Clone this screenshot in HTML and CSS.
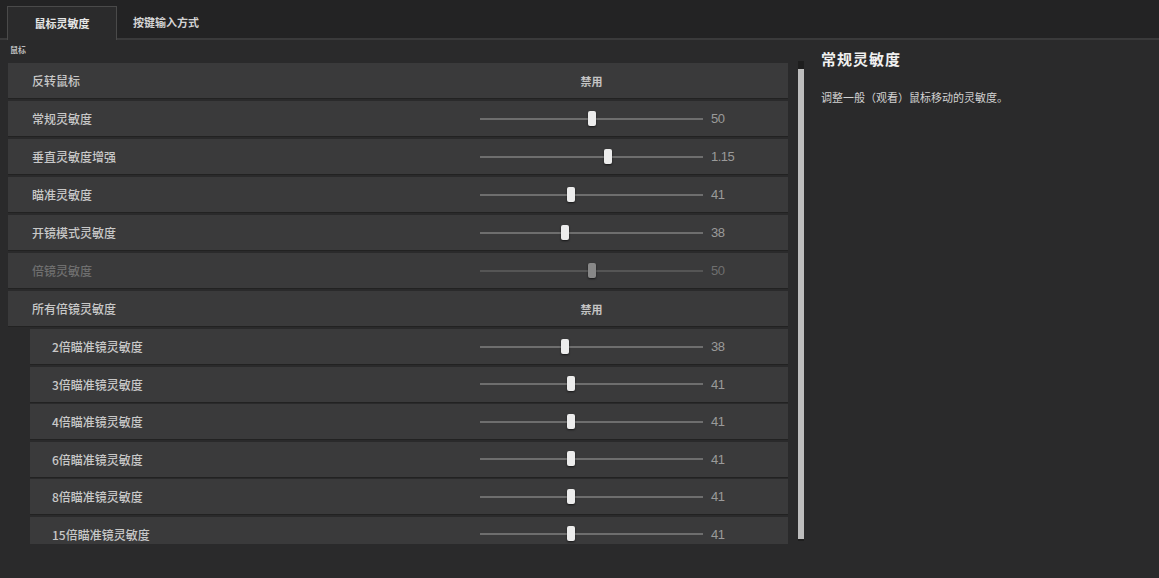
FILE: index.html
```html
<!DOCTYPE html>
<html lang="zh-CN">

<head>
    <meta charset="UTF-8">
    <title>鼠标灵敏度</title>
    <link rel="stylesheet" href="styles.css">
</head>

<body>
    <div class="tabBar">
        <div class="tab active">鼠标灵敏度</div>
        <div class="tab">按键输入方式</div>
    </div>

    <div class="main">
        <div class="settings">
            <div class="groupLabel">鼠标</div>
            <div class="list">
                <div class="row">
                    <div class="label">反转鼠标</div>
                    <div class="toggle">禁用</div>
                </div>
                <div class="row">
                    <div class="label">常规灵敏度</div>
                    <div class="slider"><div class="track"><span class="thumb" style="left: 50%"></span></div></div>
                    <div class="value">50</div>
                </div>
                <div class="row">
                    <div class="label">垂直灵敏度增强</div>
                    <div class="slider"><div class="track"><span class="thumb" style="left: 57.4%"></span></div></div>
                    <div class="value">1.15</div>
                </div>
                <div class="row">
                    <div class="label">瞄准灵敏度</div>
                    <div class="slider"><div class="track"><span class="thumb" style="left: 41%"></span></div></div>
                    <div class="value">41</div>
                </div>
                <div class="row">
                    <div class="label">开镜模式灵敏度</div>
                    <div class="slider"><div class="track"><span class="thumb" style="left: 38%"></span></div></div>
                    <div class="value">38</div>
                </div>
                <div class="row disabled">
                    <div class="label">倍镜灵敏度</div>
                    <div class="slider"><div class="track"><span class="thumb" style="left: 50%"></span></div></div>
                    <div class="value">50</div>
                </div>
                <div class="row">
                    <div class="label">所有倍镜灵敏度</div>
                    <div class="toggle">禁用</div>
                </div>
                <div class="row sub">
                    <div class="label">2倍瞄准镜灵敏度</div>
                    <div class="slider"><div class="track"><span class="thumb" style="left: 38%"></span></div></div>
                    <div class="value">38</div>
                </div>
                <div class="row sub">
                    <div class="label">3倍瞄准镜灵敏度</div>
                    <div class="slider"><div class="track"><span class="thumb" style="left: 41%"></span></div></div>
                    <div class="value">41</div>
                </div>
                <div class="row sub">
                    <div class="label">4倍瞄准镜灵敏度</div>
                    <div class="slider"><div class="track"><span class="thumb" style="left: 41%"></span></div></div>
                    <div class="value">41</div>
                </div>
                <div class="row sub">
                    <div class="label">6倍瞄准镜灵敏度</div>
                    <div class="slider"><div class="track"><span class="thumb" style="left: 41%"></span></div></div>
                    <div class="value">41</div>
                </div>
                <div class="row sub">
                    <div class="label">8倍瞄准镜灵敏度</div>
                    <div class="slider"><div class="track"><span class="thumb" style="left: 41%"></span></div></div>
                    <div class="value">41</div>
                </div>
                <div class="row sub">
                    <div class="label">15倍瞄准镜灵敏度</div>
                    <div class="slider"><div class="track"><span class="thumb" style="left: 41%"></span></div></div>
                    <div class="value">41</div>
                </div>
            </div>
        </div>

        <div class="scrollbar">
            <div class="scrollThumb"></div>
        </div>

        <div class="info">
            <h2>常规灵敏度</h2>
            <p>调整一般（观看）鼠标移动的灵敏度。</p>
        </div>
    </div>
</body>

</html>
```

FILE: styles.css
```css
body {
    margin: 0;
    background-color: #2a2a2b;
    font-family: "Noto Sans CJK SC", "Liberation Sans", sans-serif;
    color: #c8c8c8;
    overflow: hidden;
}

/* top tabs */
.tabBar {
    height: 38px;
    background-color: #232324;
    border-bottom: 2px solid #3a3a3b;
    display: flex;
    align-items: flex-end;
    padding-left: 7px;
}

.tab {
    height: 31px;
    line-height: 31px;
    padding: 0 16px;
    font-size: 11px;
    font-weight: bold;
    color: #d4d4d4;
}

.tab.active {
    width: 76px;
    text-align: center;
    background-color: #2b2b2c;
    border: 1px solid #4a4a4a;
    border-bottom: none;
    color: #e6e6e6;
    margin-bottom: -2px;
    height: 33px;
    line-height: 33px;
}

.main {
    display: flex;
}

.settings {
    width: 780px;
    margin-left: 8px;
}

.groupLabel {
    font-size: 8px;
    font-weight: bold;
    color: #bbb;
    height: 23px;
    line-height: 20px;
    margin-left: 2px;
}

.list {
    height: 481px;
    overflow: hidden;
}

.row {
    height: 35px;
    margin-bottom: 3px;
    background-color: #3a3a3b;
    box-shadow: 0 1px 0 #222;
    display: flex;
    align-items: center;
    font-size: 12px;
}

.row.sub {
    margin-left: 22px;
    margin-bottom: 2.6px;
}

.label {
    flex: 1;
    padding-left: 24px;
    font-weight: 500;
}

.row.sub .label {
    padding-left: 22px;
}

.toggle {
    width: 223px;
    margin-right: 85px;
    text-align: center;
    font-size: 11px;
    font-weight: bold;
    color: #c4c4c4;
}

.slider {
    width: 223px;
    margin-right: 8px;
}

.track {
    position: relative;
    height: 2px;
    background-color: #6e6e6e;
}

.thumb {
    position: absolute;
    top: -7px;
    width: 8px;
    height: 15px;
    margin-left: -4px;
    border-radius: 2px;
    background-color: #ececec;
    box-shadow: 0 1px 2px rgba(0, 0, 0, 0.6);
}

.value {
    width: 77px;
    font-family: "Liberation Sans", sans-serif;
    font-size: 13px;
    color: #9a9a9a;
    letter-spacing: -0.5px;
}

.row.disabled .label,
.row.disabled .value {
    color: #6f6f6f;
}

.row.disabled .track {
    background-color: #555;
}

.row.disabled .thumb {
    background-color: #888;
}

/* scrollbar between list and info */
.scrollbar {
    width: 6px;
    height: 480px;
    margin: 21px 0 0 10px;
    background-color: #1e1e1e;
    display: flex;
    flex-direction: column;
}

.scrollThumb {
    height: 470px;
    margin-top: 8px;
    background-color: #bdbdbd;
}

.info {
    margin-left: 17px;
    padding-top: 8px;
}

.info h2 {
    margin: 0;
    font-size: 15px;
    font-weight: bold;
    color: #f0f0f0;
    letter-spacing: 1px;
}

.info p {
    margin: 20px 0 0 0;
    font-size: 11px;
    color: #d2d2d2;
}
```
